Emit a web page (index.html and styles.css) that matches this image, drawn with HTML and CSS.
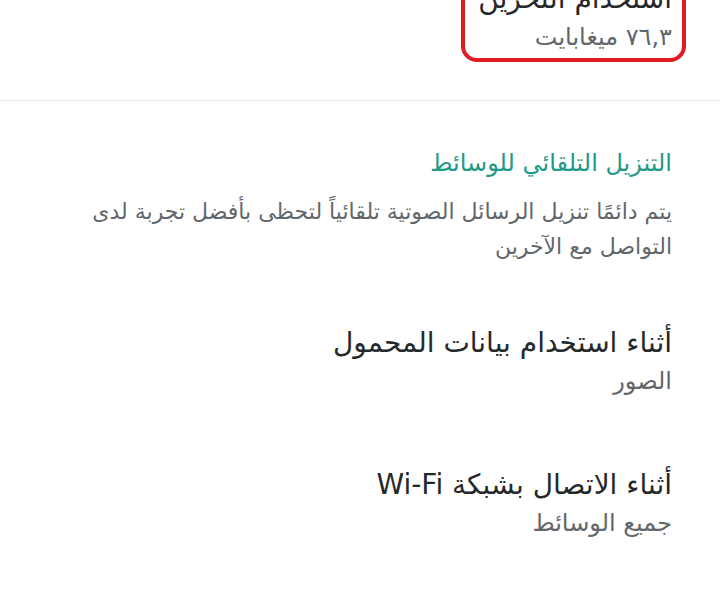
FILE: index.html
```html
<!DOCTYPE html>
<html lang="ar" dir="rtl">
<head>
<meta charset="utf-8">
<link rel="stylesheet" href="styles.css">
</head>
<body>
<div class="page">
  <div class="usage">
    <div class="highlight">
      <div class="item-title">استخدام التخزين</div>
      <div class="item-sub">٧٦,٣ ميغابايت</div>
    </div>
  </div>
  <div class="divider"></div>
  <section class="section">
    <div class="section-title">التنزيل التلقائي للوسائط</div>
    <p class="section-desc">يتم دائمًا تنزيل الرسائل الصوتية تلقائياً لتحظى بأفضل تجربة لدى التواصل مع الآخرين</p>
    <div class="row">
      <div class="item-title">أثناء استخدام بيانات المحمول</div>
      <div class="item-sub">الصور</div>
    </div>
    <div class="row">
      <div class="item-title">أثناء الاتصال بشبكة Wi-Fi</div>
      <div class="item-sub">جميع الوسائط</div>
    </div>
  </section>
</div>
</body>
</html>
```
FILE: styles.css
```css
html, body {
  margin: 0;
  padding: 0;
  background: #ffffff;
}
body {
  font-family: "DejaVu Sans", "Noto Sans", sans-serif;
  width: 720px;
  height: 600px;
  overflow: hidden;
}
.page {
  direction: rtl;
}
.usage {
  padding: 0 34px 0 0;
  display: flex;
  margin-top: -29px;
}
.highlight {
  border: 4px solid #e21b23;
  border-radius: 16px;
  padding: 4px 10px 3px 13px;
}
.item-title {
  font-size: 28px;
  line-height: 40px;
  color: #26292c;
}
.item-sub {
  font-size: 24px;
  line-height: 36px;
  color: #62676b;
}
.divider {
  height: 1px;
  background: #e4e8e8;
  margin-top: 38px;
}
.section {
  padding: 45px 48px 0 48px;
}
.section-title {
  font-size: 24px;
  line-height: 34px;
  color: #229987;
}
.section-desc {
  margin: 14px 0 0;
  font-size: 22px;
  line-height: 35px;
  color: #62676b;
}
.row {
  padding-top: 59px;
}
.row + .row {
  padding-top: 66px;
}
```
